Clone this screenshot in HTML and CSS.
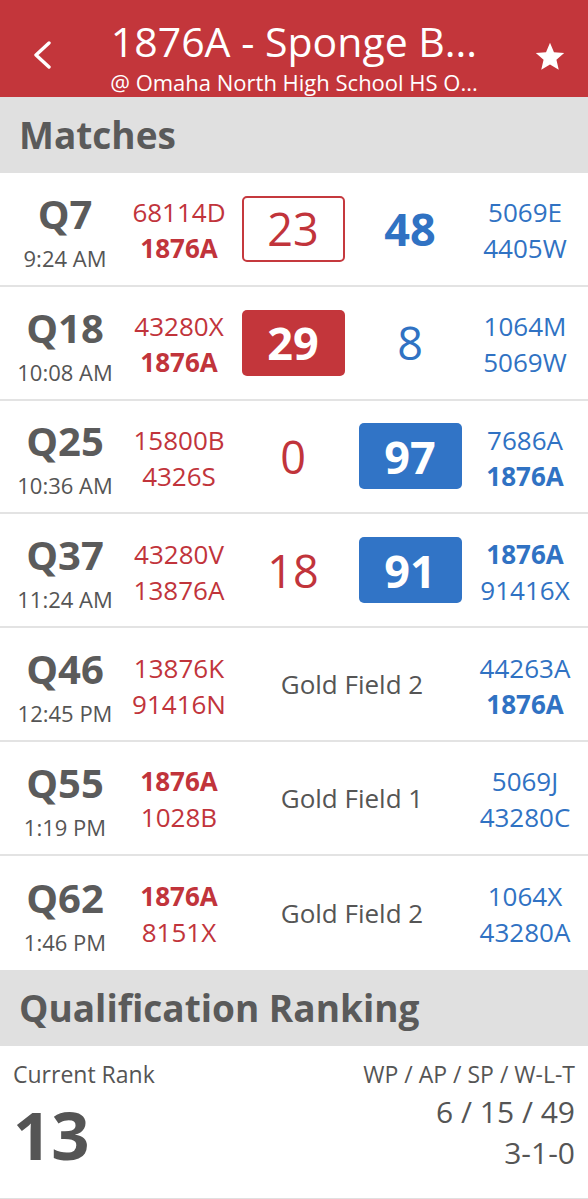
FILE: index.html
```html
<!DOCTYPE html>
<html>
<head>
<meta charset="utf-8">
<link rel="stylesheet" href="styles.css">
</head>
<body>
<header class="topbar">
  <div class="back">
    <svg width="20" height="28" viewBox="0 0 20 28"><polyline points="17,2 4,14 17,26" fill="none" stroke="#fff" stroke-width="3.4" stroke-linecap="round" stroke-linejoin="round"/></svg>
  </div>
  <div class="titles">
    <div class="title">1876A - Sponge B...</div>
    <div class="subtitle">@ Omaha North High School HS O...</div>
  </div>
  <div class="fav">
    <svg width="34" height="34" viewBox="0 0 24 24"><path fill="#fff" d="M12 17.27L18.18 21l-1.64-7.03L22 9.24l-7.19-.61L12 2 9.19 8.63 2 9.24l5.46 4.73L5.82 21z"/></svg>
  </div>
</header>

<div class="section-head">Matches</div>

<div class="matches">
  <div class="match">
    <div class="mid"><div class="qn">Q7</div><div class="time">9:24 AM</div></div>
    <div class="teams red"><div>68114D</div><div class="me">1876A</div></div>
    <div class="score"><span class="box outline-red">23</span></div>
    <div class="score"><span class="plain blue strong">48</span></div>
    <div class="teams blue"><div>5069E</div><div>4405W</div></div>
  </div>
  <div class="match">
    <div class="mid"><div class="qn">Q18</div><div class="time">10:08 AM</div></div>
    <div class="teams red"><div>43280X</div><div class="me">1876A</div></div>
    <div class="score"><span class="box fill-red">29</span></div>
    <div class="score"><span class="plain blue">8</span></div>
    <div class="teams blue"><div>1064M</div><div>5069W</div></div>
  </div>
  <div class="match">
    <div class="mid"><div class="qn">Q25</div><div class="time">10:36 AM</div></div>
    <div class="teams red"><div>15800B</div><div>4326S</div></div>
    <div class="score"><span class="plain red">0</span></div>
    <div class="score"><span class="box fill-blue">97</span></div>
    <div class="teams blue"><div>7686A</div><div class="me">1876A</div></div>
  </div>
  <div class="match">
    <div class="mid"><div class="qn">Q37</div><div class="time">11:24 AM</div></div>
    <div class="teams red"><div>43280V</div><div>13876A</div></div>
    <div class="score"><span class="plain red">18</span></div>
    <div class="score"><span class="box fill-blue">91</span></div>
    <div class="teams blue"><div class="me">1876A</div><div>91416X</div></div>
  </div>
  <div class="match">
    <div class="mid"><div class="qn">Q46</div><div class="time">12:45 PM</div></div>
    <div class="teams red"><div>13876K</div><div>91416N</div></div>
    <div class="field">Gold Field 2</div>
    <div class="teams blue"><div>44263A</div><div class="me">1876A</div></div>
  </div>
  <div class="match">
    <div class="mid"><div class="qn">Q55</div><div class="time">1:19 PM</div></div>
    <div class="teams red"><div class="me">1876A</div><div>1028B</div></div>
    <div class="field">Gold Field 1</div>
    <div class="teams blue"><div>5069J</div><div>43280C</div></div>
  </div>
  <div class="match">
    <div class="mid"><div class="qn">Q62</div><div class="time">1:46 PM</div></div>
    <div class="teams red"><div class="me">1876A</div><div>8151X</div></div>
    <div class="field">Gold Field 2</div>
    <div class="teams blue"><div>1064X</div><div>43280A</div></div>
  </div>
</div>

<div class="section-head">Qualification Ranking</div>

<div class="ranking">
  <div class="rank-left">
    <div class="label">Current Rank</div>
    <div class="rank">13</div>
  </div>
  <div class="rank-right">
    <div class="label">WP / AP / SP / W-L-T</div>
    <div class="stats">
      <div>6 / 15 / 49</div>
      <div>3-1-0</div>
    </div>
  </div>
</div>
<div class="bottom-strip"></div>
</body>
</html>
```

FILE: styles.css
```css
* { box-sizing: border-box; }
html, body { margin: 0; padding: 0; }
body {
  font-family: "Open Sans", "Noto Sans", sans-serif;
  background: #ffffff;
  color: #5a5a5a;
  width: 588px;
}

.topbar {
  height: 97px;
  background: #c3363b;
  color: #ffffff;
  display: grid;
  grid-template-columns: 88px 1fr 88px;
  align-items: start;
}
.back {
  padding: 41px 0 0 32px;
}
.back svg, .fav svg { display: block; }
.fav {
  padding: 40px 0 0 33px;
}
.titles {
  text-align: center;
  white-space: nowrap;
  padding-top: 19px;
}
.title {
  font-size: 41px;
  line-height: 44px;
}
.subtitle {
  font-size: 22px;
  line-height: 26px;
  margin-top: 6px;
}

.section-head {
  height: 76px;
  background: #e0e0e0;
  font-size: 37px;
  font-weight: 700;
  line-height: 76px;
  padding-left: 19px;
  color: #5a5a5a;
}

.match {
  display: grid;
  grid-template-columns: 130px 98px 130px 104px 126px;
  align-items: center;
  height: 113.8px;
  border-bottom: 2px solid #e3e3e3;
}
.match:last-child { border-bottom: none; }

.mid {
  text-align: center;
  padding-top: 8px;
}
.qn {
  font-size: 40px;
  line-height: 40px;
  font-weight: 700;
  color: #5b5b5b;
}
.time {
  font-size: 22px;
  line-height: 28px;
  margin-top: 10px;
  color: #555555;
}

.teams {
  text-align: center;
  font-size: 26px;
  line-height: 36px;
  padding-top: 3px;
}
.teams.red { color: #c1343b; }
.teams.blue { color: #3072c3; }
.teams .me { font-weight: 700; }

.score {
  display: flex;
  justify-content: center;
  align-items: center;
}
.box {
  width: 103px;
  height: 66px;
  border-radius: 5px;
  display: flex;
  align-items: center;
  justify-content: center;
  font-size: 45px;
  line-height: 1;
}
.outline-red {
  border: 2px solid #c5393e;
  color: #c1343b;
}
.fill-red {
  background: #c3363b;
  color: #ffffff;
  font-weight: 700;
}
.fill-blue {
  background: #3174c6;
  color: #ffffff;
  font-weight: 700;
}
.plain {
  font-size: 45px;
  line-height: 1;
}
.plain.red { color: #c1343b; }
.plain.blue { color: #3072c3; }
.plain.strong { font-weight: 700; }

.field {
  grid-column: 3 / span 2;
  text-align: center;
  font-size: 26px;
  color: #555555;
  padding-left: 14px;
}

.ranking {
  display: flex;
  justify-content: space-between;
  height: 152px;
  padding: 13.5px 13px 0 13px;
}
.label {
  font-size: 23px;
  line-height: 30px;
  color: #555555;
}
.rank {
  font-size: 67px;
  line-height: 67px;
  font-weight: 700;
  margin-top: 12px;
  color: #555555;
}
.rank-right { text-align: right; }
.stats {
  margin-top: 2px;
  font-size: 30px;
  line-height: 41px;
  color: #555555;
}
.bottom-strip {
  height: 4px;
  background: #e0e0e0;
}
```
